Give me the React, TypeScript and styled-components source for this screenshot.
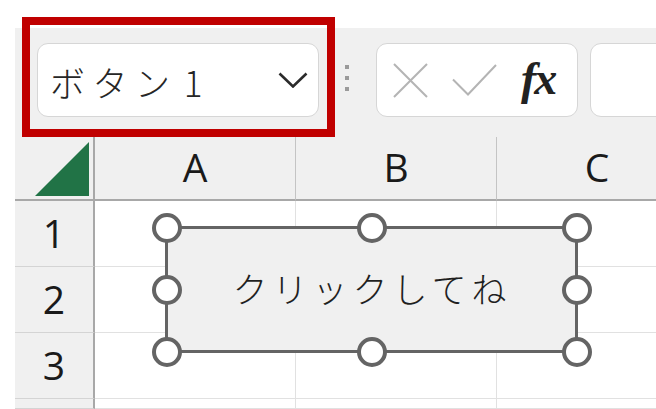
import React from "react";
import styled, { createGlobalStyle } from "styled-components";

const Global = createGlobalStyle`
  html, body { margin: 0; padding: 0; background: #ffffff; }
  body { font-family: "Open Sans", "Noto Sans CJK JP", sans-serif; }
`;

const Page = styled.div`
  position: relative;
  width: 656px;
  height: 409px;
  overflow: hidden;
  padding: 28px 0 0 15px;
  box-sizing: border-box;
  background: #ffffff;
`;

const Sheet = styled.div`
  display: flex;
  flex-direction: column;
  height: 100%;
  background: #f0f0f0;
  overflow: hidden;
`;

const Toolbar = styled.div`
  display: flex;
  align-items: flex-start;
  gap: 26px;
  height: 109px;
  padding: 15px 0 0 22px;
  box-sizing: border-box;
  flex-shrink: 0;
`;

const Field = styled.div<{ $w?: number }>`
  box-sizing: border-box;
  height: 74px;
  background: #ffffff;
  border: 1px solid #d6d6d6;
  border-radius: 11px;
  display: flex;
  align-items: center;
  ${(p) => (p.$w ? `width: ${p.$w}px; flex-shrink: 0;` : `flex: 1 0 100px; margin-right: -30px;`)}
`;

const NameBox = styled(Field)`
  padding: 0 10px 0 12px;
  justify-content: space-between;
`;

const NameText = styled.span`
  font-family: "Noto Sans CJK JP", sans-serif;
  font-weight: 300;
  font-size: 35px;
  letter-spacing: 7.5px;
  word-spacing: -9px;
  color: #262626;
  line-height: 1;
  margin-top: 2px;
`;

const Grip = styled.div`
  display: flex;
  flex-direction: column;
  gap: 7px;
  margin-top: 22px;
  width: 4px;
  flex-shrink: 0;
`;

const GripDot = styled.span`
  width: 4px;
  height: 4px;
  background: #9a9a9a;
`;

const FormulaGroup = styled.div`
  display: flex;
  gap: 12px;
  flex: 1;
  margin-left: 1px;
`;

const FxBox = styled(Field)`
  padding: 0 12px 0 16px;
  gap: 24px;
`;

const Fx = styled.span`
  font-family: "Liberation Serif", serif;
  font-style: italic;
  font-weight: 700;
  font-size: 46px;
  color: #222222;
  line-height: 1;
  margin-top: -2px;
  letter-spacing: -2px;
`;

const Grid = styled.div`
  position: relative;
  flex: 1;
  display: grid;
  grid-template-columns: 80px 201px 201px 201px;
  grid-template-rows: 64px 66px 66px 66px 1fr;
`;

const Corner = styled.div`
  box-sizing: border-box;
  border-right: 2px solid #a8a8a8;
  border-bottom: 2px solid #a8a8a8;
  display: flex;
  align-items: flex-end;
  justify-content: flex-end;
  padding: 0 4px 3px 0;
`;

const ColHeader = styled.div`
  box-sizing: border-box;
  border-bottom: 2px solid #a8a8a8;
  border-right: 1px solid #c4c4c4;
  display: flex;
  align-items: center;
  justify-content: center;
  font-family: "Open Sans", sans-serif;
  font-size: 39px;
  color: #1a1a1a;
  padding-bottom: 3px;
`;

const RowHeader = styled.div`
  box-sizing: border-box;
  border-right: 2px solid #a8a8a8;
  border-bottom: 1px solid #d4d4d4;
  display: flex;
  align-items: center;
  justify-content: center;
  font-family: "Open Sans", sans-serif;
  font-size: 39px;
  color: #1a1a1a;
  padding-bottom: 2px;
`;

const Cell = styled.div`
  box-sizing: border-box;
  background: #ffffff;
  border-right: 1px solid #e1e1e1;
  border-bottom: 1px solid #e1e1e1;
`;

const Shape = styled.div`
  position: absolute;
  left: 150px;
  top: 89px;
  width: 413px;
  height: 127px;
  box-sizing: border-box;
  border: 3px solid #646464;
  background: #f0f0f0;
  display: flex;
  align-items: center;
  justify-content: center;
`;

const ShapeText = styled.span`
  font-family: "Noto Sans CJK JP", sans-serif;
  font-weight: 300;
  font-size: 35px;
  letter-spacing: 5px;
  color: #1f1f1f;
  margin-left: 1px;
  margin-top: -4px;
`;

type Pos = "start" | "mid" | "end";

const Handle = styled.span<{ $x: Pos; $y: Pos }>`
  position: absolute;
  width: 30px;
  height: 30px;
  box-sizing: border-box;
  border-radius: 50%;
  border: 4px solid #646464;
  background: #ffffff;
  ${(p) =>
    p.$x === "start"
      ? "left: -16.5px;"
      : p.$x === "end"
      ? "right: -16.5px;"
      : "left: calc(50% - 15px);"}
  ${(p) =>
    p.$y === "start"
      ? "top: -16.5px;"
      : p.$y === "end"
      ? "bottom: -16.5px;"
      : "top: calc(50% - 15px);"}
`;

const Highlight = styled.div`
  position: absolute;
  left: 22px;
  top: 17px;
  width: 313px;
  height: 120px;
  box-sizing: border-box;
  border: 8px solid #c00000;
  pointer-events: none;
`;

const handles: [Pos, Pos][] = [
  ["start", "start"],
  ["mid", "start"],
  ["end", "start"],
  ["start", "mid"],
  ["end", "mid"],
  ["start", "end"],
  ["mid", "end"],
  ["end", "end"],
];

export default function App() {
  const rows = ["1", "2", "3", ""];
  return (
    <>
      <Global />
      <Page>
        <Sheet>
          <Toolbar>
            <NameBox $w={282}>
              <NameText>ボタン 1</NameText>
              <svg width="30" height="16" viewBox="0 0 30 16">
                <polyline points="1.5,1.5 15,14.5 28.5,1.5" fill="none" stroke="#2b2b2b" strokeWidth="2.6" />
              </svg>
            </NameBox>
            <Grip>
              <GripDot />
              <GripDot />
              <GripDot />
            </Grip>
            <FormulaGroup>
              <FxBox $w={202}>
                <svg width="35" height="35" viewBox="0 0 35 35">
                  <path d="M1 1 L34 34 M34 1 L1 34" stroke="#b4b4b4" strokeWidth="2" fill="none" />
                </svg>
                <svg width="45" height="32" viewBox="0 0 45 32">
                  <polyline points="1,15.5 16,30.5 44,1" stroke="#b4b4b4" strokeWidth="2" fill="none" />
                </svg>
                <Fx>fx</Fx>
              </FxBox>
              <Field />
            </FormulaGroup>
          </Toolbar>
          <Grid>
            <Corner>
              <svg width="54" height="54" viewBox="0 0 54 54">
                <polygon points="54,0 54,54 0,54" fill="#217346" />
              </svg>
            </Corner>
            <ColHeader>A</ColHeader>
            <ColHeader>B</ColHeader>
            <ColHeader>C</ColHeader>
            {rows.map((r, i) => (
              <React.Fragment key={i}>
                <RowHeader>{r}</RowHeader>
                <Cell />
                <Cell />
                <Cell />
              </React.Fragment>
            ))}
            <Shape>
              <ShapeText>クリックしてね</ShapeText>
              {handles.map(([x, y], i) => (
                <Handle key={i} $x={x} $y={y} />
              ))}
            </Shape>
          </Grid>
        </Sheet>
        <Highlight />
      </Page>
    </>
  );
}
